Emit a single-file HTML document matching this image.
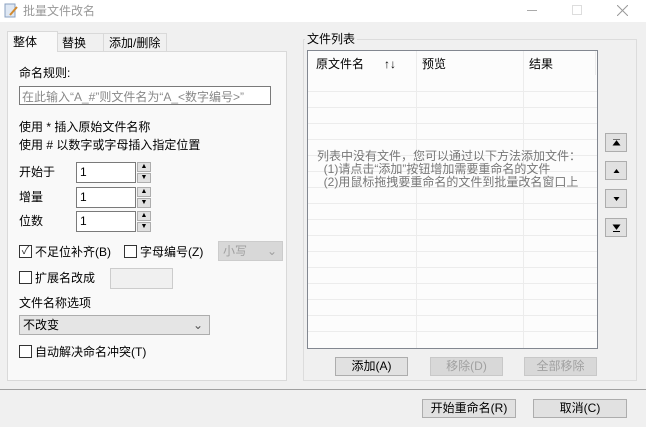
<!DOCTYPE html>
<html><head><meta charset="utf-8"><style>
*{box-sizing:border-box;margin:0;padding:0}
body{width:646px;height:427px;background:#f0f0f0;font-family:"Liberation Sans","Noto Sans CJK SC","WenQuanYi Zen Hei",sans-serif;font-size:12px;color:#000;position:relative;overflow:hidden}
.a{position:absolute;white-space:nowrap;line-height:14px}
.box{position:absolute;background:#fff;border:1px solid #7a7a7a}
.btn{position:absolute;background:#e1e1e1;border:1px solid #adadad;text-align:center;line-height:16px}
.dis{color:#a0a0a0;background:#d8d8d8;border-color:#c8c8c8}
.cb{position:absolute;width:13px;height:13px;border:1px solid #333;background:#fff}
.spin{position:absolute;width:14px;height:21px}
.spin div{height:10px;border:1px solid #adadad;background:#e1e1e1;font-size:7px;line-height:8px;text-align:center;margin-bottom:1px}
.row{position:absolute;left:0;width:100%;height:1px;background:#ececec}
.sb svg{position:absolute;left:6px;top:5px}
</style></head><body>
<div class="a" style="left:0;top:0;width:646px;height:22px;background:#fff"></div>
<svg class="a" style="left:4px;top:3px" width="14" height="16"><rect x="1" y="1" width="10" height="13" fill="#dfe8f4" stroke="#8aa0c0"/><path d="M6 12 L13 4" stroke="#d08a30" stroke-width="2"/></svg>
<div class="a" style="left:23px;top:4px;color:#999;font-size:12px">批量文件改名</div>
<div class="a" style="left:527px;top:10px;width:10px;height:1px;background:#aaa"></div>
<div class="a" style="left:572px;top:5px;width:10px;height:10px;border:1px solid #ddd"></div>
<svg class="a" style="left:617px;top:5px" width="11" height="11"><path d="M0 0L11 11M11 0L0 11" stroke="#999" stroke-width="1"/></svg>

<div class="a" style="left:7px;top:51px;width:280px;height:330px;border:1px solid #d9d9d9;background:#f9f9f9"></div>
<div class="a" style="left:7px;top:31px;width:51px;height:21px;background:#f9f9f9;border:1px solid #d9d9d9;border-bottom:none;padding:3px 5px">整体</div>
<div class="a" style="left:57px;top:33px;width:47px;height:18px;background:#f0f0f0;border:1px solid #d9d9d9;border-bottom:none;padding:2px 4px">替换</div>
<div class="a" style="left:103px;top:33px;width:64px;height:18px;background:#f0f0f0;border:1px solid #d9d9d9;border-bottom:none;padding:2px 5px">添加/删除</div>

<div class="a" style="left:19px;top:66px">命名规则:</div>
<div class="box" style="left:19px;top:86px;width:252px;height:19px;color:#888;padding:1px 2px">在此输入“A_#”则文件名为“A_&lt;数字编号&gt;”</div>
<div class="a" style="left:19px;top:120px">使用 * 插入原始文件名称</div>
<div class="a" style="left:19px;top:138px">使用 # 以数字或字母插入指定位置</div>

<div class="a" style="left:19px;top:165px">开始于</div>
<div class="box" style="left:76px;top:162px;width:60px;height:21px;padding:2px 3px">1</div>
<div class="spin" style="left:137px;top:162px"><div>▲</div><div>▼</div></div>
<div class="a" style="left:19px;top:190px">增量</div>
<div class="box" style="left:76px;top:187px;width:60px;height:21px;padding:2px 3px">1</div>
<div class="spin" style="left:137px;top:187px"><div>▲</div><div>▼</div></div>
<div class="a" style="left:19px;top:214px">位数</div>
<div class="box" style="left:76px;top:211px;width:60px;height:21px;padding:2px 3px">1</div>
<div class="spin" style="left:137px;top:211px"><div>▲</div><div>▼</div></div>

<div class="cb" style="left:19px;top:245px;font-size:11px;line-height:11px;text-align:center;color:#333">✓</div>
<div class="a" style="left:35px;top:245px">不足位补齐(B)</div>
<div class="cb" style="left:124px;top:245px"></div>
<div class="a" style="left:140px;top:245px">字母编号(Z)</div>
<div class="a" style="left:218px;top:241px;width:65px;height:20px;background:#d8d8d8;border:1px solid #ccc;color:#a0a0a0;padding:2px 4px">小写<span style="position:absolute;right:5px;top:2px">⌄</span></div>
<div class="cb" style="left:19px;top:271px"></div>
<div class="a" style="left:35px;top:271px">扩展名改成</div>
<div class="a" style="left:110px;top:268px;width:63px;height:21px;border:1px solid #ccc;background:#f0f0f0"></div>
<div class="a" style="left:19px;top:296px">文件名称选项</div>
<div class="a" style="left:19px;top:315px;width:191px;height:20px;background:#e5e5e5;border:1px solid #adadad;padding:2px 3px">不改变<span style="position:absolute;right:6px;top:2px;color:#555">⌄</span></div>
<div class="cb" style="left:19px;top:345px"></div>
<div class="a" style="left:35px;top:345px">自动解决命名冲突(T)</div>

<div class="a" style="left:303px;top:39px;width:334px;height:342px;border:1px solid #dcdcdc"></div>
<div class="a" style="left:305px;top:32px;background:#f0f0f0;padding:0 2px">文件列表</div>
<div class="a" style="left:307px;top:50px;width:291px;height:299px;background:#fcfcfc;border:1px solid #828790;overflow:hidden">
<div class="a" style="left:8px;top:6px">原文件名</div>
<div class="a" style="left:76px;top:6px">↑↓</div>
<div class="a" style="left:114px;top:6px">预览</div>
<div class="a" style="left:221px;top:6px">结果</div>
<div class="a" style="left:108px;top:0;width:1px;height:299px;background:#ececec"></div>
<div class="a" style="left:215px;top:0;width:1px;height:299px;background:#ececec"></div>
<div class="a" style="left:287px;top:0;width:1px;height:24px;background:#ececec"></div>
<div class="row" style="top:40px"></div><div class="row" style="top:56px"></div><div class="row" style="top:72px"></div><div class="row" style="top:88px"></div><div class="row" style="top:104px"></div><div class="row" style="top:120px"></div><div class="row" style="top:136px"></div><div class="row" style="top:152px"></div><div class="row" style="top:168px"></div><div class="row" style="top:184px"></div><div class="row" style="top:200px"></div><div class="row" style="top:216px"></div><div class="row" style="top:232px"></div><div class="row" style="top:248px"></div><div class="row" style="top:264px"></div><div class="row" style="top:280px"></div>
<div class="a" style="left:9px;top:99px;color:#777;line-height:13px">列表中没有文件，您可以通过以下方法添加文件：<br>&nbsp;&nbsp;(1)请点击“添加”按钮增加需要重命名的文件<br>&nbsp;&nbsp;(2)用鼠标拖拽要重命名的文件到批量改名窗口上</div>
</div>
<div class="btn sb" style="left:605px;top:133px;width:22px;height:19px"><svg width="9" height="8"><path d="M1 0H8M4.5 2L1.5 6H7.5Z" fill="#000" stroke="#000" stroke-width="1"/></svg></div>
<div class="btn sb" style="left:605px;top:161px;width:22px;height:19px"><svg width="9" height="8"><path d="M4.5 2L1.5 6H7.5Z" fill="#000"/></svg></div>
<div class="btn sb" style="left:605px;top:189px;width:22px;height:19px"><svg width="9" height="8"><path d="M1.5 2H7.5L4.5 6Z" fill="#000"/></svg></div>
<div class="btn sb" style="left:605px;top:218px;width:22px;height:19px"><svg width="9" height="8"><path d="M1.5 1H7.5L4.5 5ZM1 7.5H8" fill="#000" stroke="#000" stroke-width="1"/></svg></div>
<div class="btn" style="left:335px;top:357px;width:73px;height:19px">添加(A)</div>
<div class="btn dis" style="left:430px;top:357px;width:73px;height:19px">移除(D)</div>
<div class="btn dis" style="left:524px;top:357px;width:73px;height:19px">全部移除</div>

<div class="a" style="left:0;top:389px;width:646px;height:1px;background:#a0a0a0"></div>
<div class="btn" style="left:422px;top:399px;width:94px;height:19px">开始重命名(R)</div>
<div class="btn" style="left:533px;top:399px;width:94px;height:19px">取消(C)</div>
</body></html>
